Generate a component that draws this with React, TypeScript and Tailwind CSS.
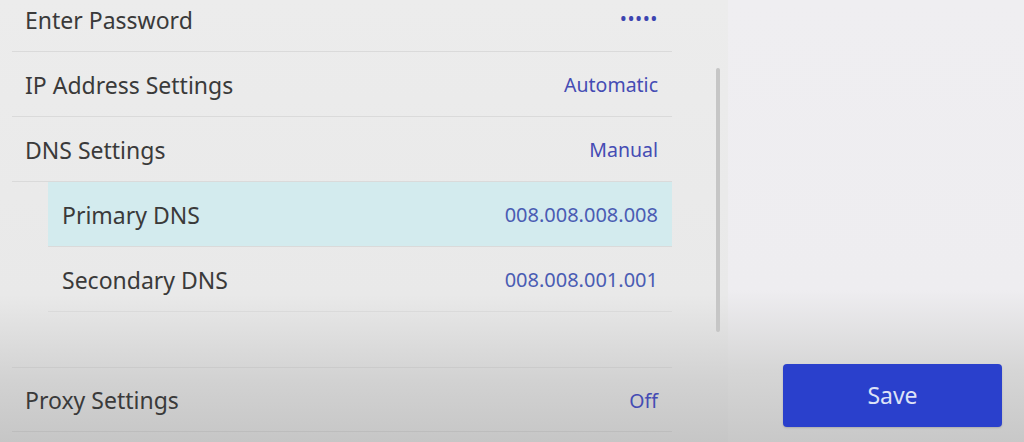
const font = { fontFamily: '"Noto Sans", "Open Sans", sans-serif' }

interface Row {
  label: string
  value: string
  sub?: boolean
  active?: boolean
  numeric?: boolean
}

const rows: Row[] = [
  { label: "Enter Password", value: "•••••" },
  { label: "IP Address Settings", value: "Automatic" },
  { label: "DNS Settings", value: "Manual" },
  { label: "Primary DNS", value: "008.008.008.008", sub: true, active: true, numeric: true },
  { label: "Secondary DNS", value: "008.008.001.001", sub: true, numeric: true },
]

function SettingRow({ row }: { row: Row }) {
  return (
    <div
      className={`flex items-center justify-between h-[65px] border-b border-[#dadada] ${
        row.sub ? "ml-[36px] pl-[14px] pr-[14px]" : "pl-[13px] pr-[14px]"
      } ${row.active ? "bg-[#d3ebee]" : ""}`}
    >
      <span className="text-[23px] text-[#3a3a3a] pt-[2px]">{row.label}</span>
      <span
        className={`pt-[2px] ${row.numeric ? "text-[#4a5cb3] text-[20px]" : "text-[#454cb4] text-[19.5px]"} ${
          row.value.startsWith("•") ? "tracking-[0.5px] !text-[19px] !text-[#3c44b0] pb-[2px]" : ""
        }`}
      >
        {row.value}
      </span>
    </div>
  )
}

export default function App() {
  return (
    <div className="w-[1024px] h-[442px] flex overflow-hidden" style={font}>
      <div className="w-[728px] h-full flex bg-[linear-gradient(to_bottom,#ececec_0px,#e9e9e9_295px,#d2d2d2_380px,#c6c6c6_442px)]">
        <div className="w-[660px] ml-[12px] mt-[-13px] flex flex-col">
          {rows.map((r) => (
            <SettingRow key={r.label} row={r} />
          ))}
          <div className="h-[56px] border-b border-[#cbcbcb]" />
          <div className="flex items-center justify-between h-[64px] pl-[13px] pr-[14px] border-b border-[#bdbdbd]">
            <span className="text-[23px] text-[#3a3a3a] pt-[2px]">Proxy Settings</span>
            <span className="text-[19.5px] text-[#454cb4] pt-[2px]">Off</span>
          </div>
        </div>
        <div className="ml-[44px] pt-[68px]">
          <div className="w-[4px] h-[264px] rounded-full bg-[#c6c6c6]" />
        </div>
      </div>
      <div className="flex-1 h-full flex flex-col justify-end pl-[55px] pr-[22px] pb-[15px] bg-[linear-gradient(to_bottom,#efeef1_0px,#eeedf0_290px,#d6d6d6_370px,#c8c8c8_442px)]">
        <button className="h-[63px] w-full rounded-[4px] bg-[#2a40cc] text-[#dde3f7] text-[23px] shadow-[0_1px_2px_rgba(0,0,0,0.15)]">
          Save
        </button>
      </div>
    </div>
  )
}
